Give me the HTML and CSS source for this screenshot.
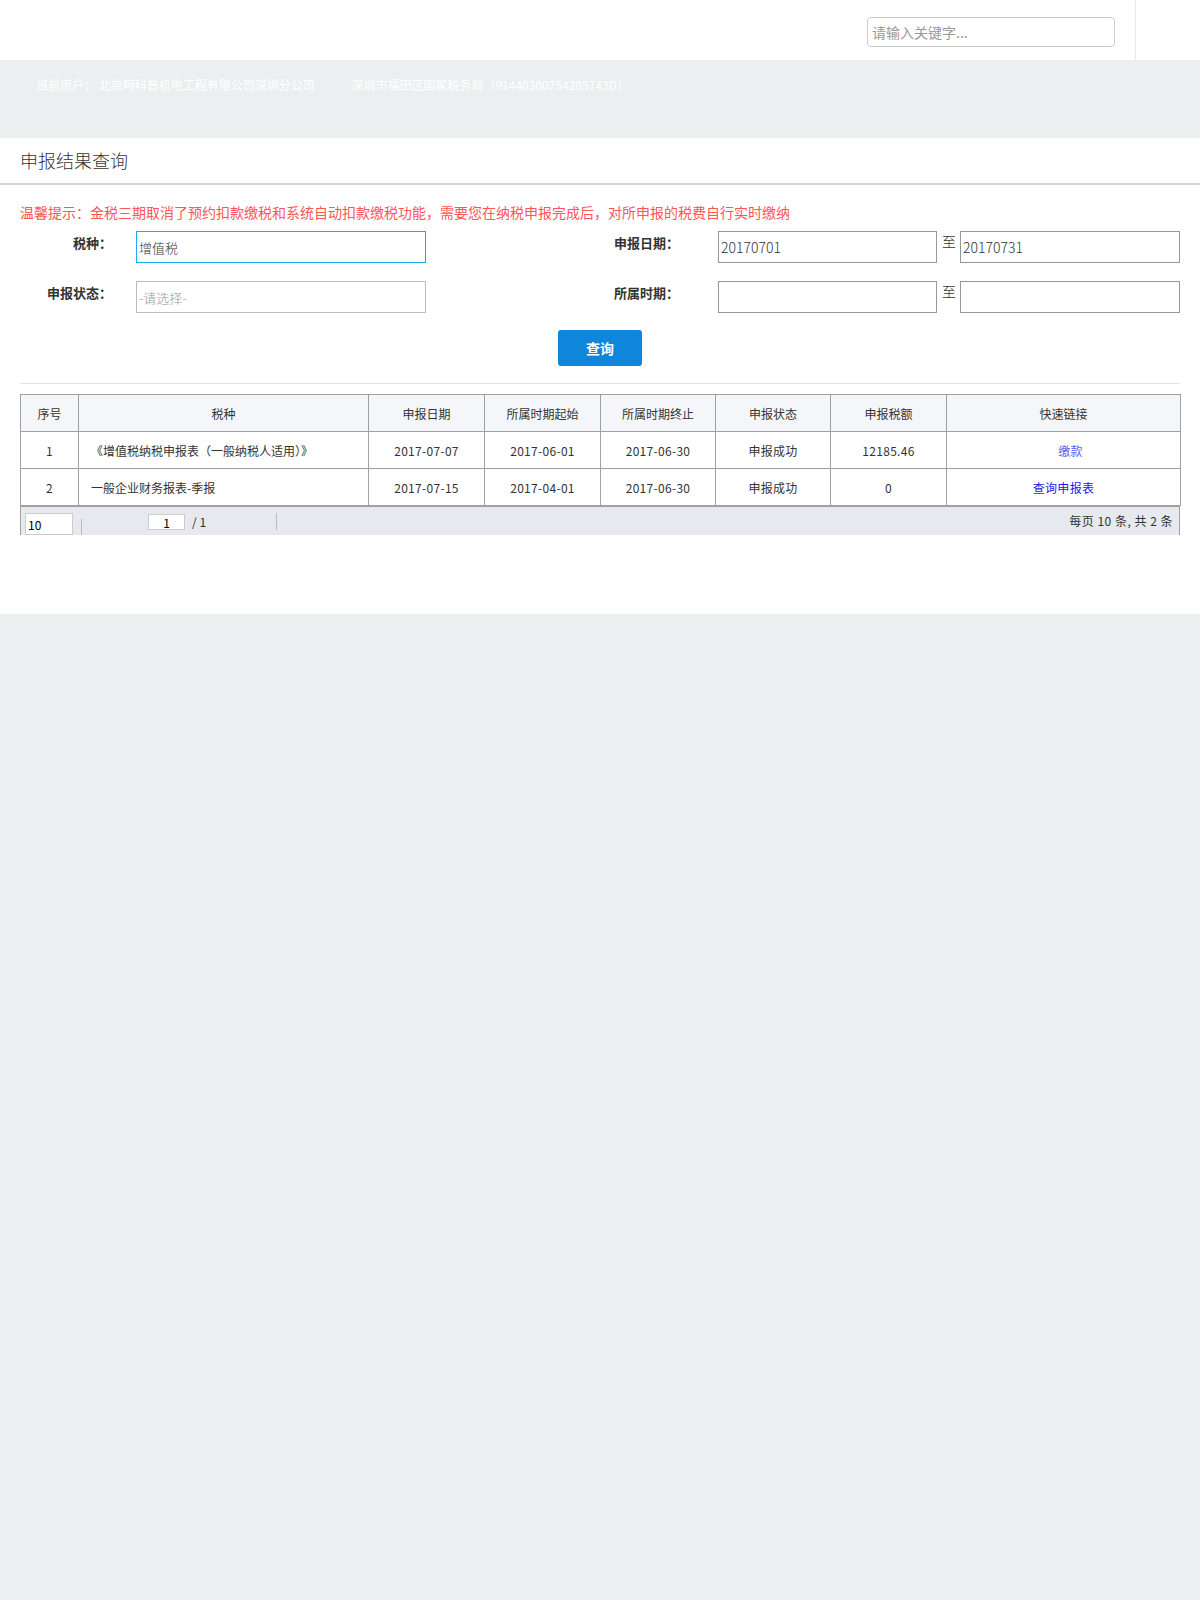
FILE: index.html
```html
<!DOCTYPE html>
<html lang="zh-CN">
<head>
<meta charset="utf-8">
<title>申报结果查询</title>
<link rel="stylesheet" href="styles.css">
</head>
<body>
<header class="topbar">
  <input class="search" type="text" placeholder="请输入关键字...">
  <div class="top-divider"></div>
</header>
<div class="userbar">
  <span class="user">当前用户：&nbsp;北京阿科普机电工程有限公司深圳分公司</span>
  <span class="bureau">深圳市福田区国家税务局（91440300754285743D）</span>
</div>
<main class="panel">
  <h1 class="panel-title">申报结果查询</h1>
  <div class="panel-body">
    <p class="notice">温馨提示：金税三期取消了预约扣款缴税和系统自动扣款缴税功能，需要您在纳税申报完成后，对所申报的税费自行实时缴纳</p>
    <div class="form-row">
      <div class="field-left">
        <label class="lbl">税种：</label>
        <input class="ipt ipt-focus" type="text" value="增值税">
      </div>
      <div class="field-right">
        <label class="lbl lbl-r">申报日期：</label>
        <input class="ipt ipt-date" type="text" value="20170701">
        <span class="to">至</span>
        <input class="ipt ipt-date2" type="text" value="20170731">
      </div>
    </div>
    <div class="form-row row2">
      <div class="field-left">
        <label class="lbl">申报状态：</label>
        <input class="ipt ipt-light" type="text" placeholder="-请选择-">
      </div>
      <div class="field-right">
        <label class="lbl lbl-r">所属时期：</label>
        <input class="ipt ipt-date" type="text">
        <span class="to">至</span>
        <input class="ipt ipt-date2" type="text">
      </div>
    </div>
    <div class="btn-row"><button class="btn" type="button">查询</button></div>
    <hr class="divider">
    <div class="grid">
      <table class="tbl">
        <colgroup>
          <col style="width:58px"><col style="width:290px"><col style="width:116px"><col style="width:116px">
          <col style="width:115px"><col style="width:115px"><col style="width:116px"><col style="width:234px">
        </colgroup>
        <thead>
          <tr><th>序号</th><th>税种</th><th>申报日期</th><th>所属时期起始</th><th>所属时期终止</th><th>申报状态</th><th>申报税额</th><th>快速链接</th></tr>
        </thead>
        <tbody>
          <tr><td>1</td><td class="left">《增值税纳税申报表（一般纳税人适用）》</td><td>2017-07-07</td><td>2017-06-01</td><td>2017-06-30</td><td>申报成功</td><td>12185.46</td><td><a class="lnk lnk-pay" href="#">缴款</a></td></tr>
          <tr><td>2</td><td class="left">一般企业财务报表-季报</td><td>2017-07-15</td><td>2017-04-01</td><td>2017-06-30</td><td>申报成功</td><td>0</td><td><a class="lnk" href="#">查询申报表</a></td></tr>
        </tbody>
      </table>
      <div class="pager">
        <input class="pg-size" type="text" value="10">
        <span class="pg-sep pg-sep1"></span>
        <input class="pg-num" type="text" value="1">
        <span class="pg-total">/ 1</span>
        <span class="pg-sep pg-sep2"></span>
        <span class="pg-info">每页 10 条, 共 2 条</span>
      </div>
    </div>
  </div>
</main>
</body>
</html>
```
FILE: styles.css
```css
* { box-sizing: border-box; }
body {
  margin: 0;
  background: #ebeff0;
  font-family: "Noto Sans CJK SC", "Noto Sans", sans-serif;
  color: #333;
}
.topbar {
  height: 60px;
  background: #fff;
  display: flex;
  justify-content: flex-end;
  padding-right: 64px;
}
.search {
  margin-top: 17px;
  width: 248px;
  height: 30px;
  border: 1px solid #ccc;
  border-radius: 4px;
  padding: 0 4px;
  font-family: inherit;
  font-size: 14px;
  color: #555;
  outline: none;
}
.search::placeholder { color: #999; }
.top-divider {
  margin-left: 20px;
  width: 1px;
  height: 60px;
  background: #e8e8e8;
}
.userbar {
  height: 78px;
  padding: 16px 0 0 36px;
  color: #fff;
  font-size: 12px;
  line-height: 18px;
}
.bureau { margin-left: 34px; }
.panel {
  background: #fff;
  height: 476px;
}
.panel-title {
  margin: 0;
  height: 47px;
  padding-left: 20px;
  font-size: 18px;
  font-weight: 300;
  line-height: 45px;
  color: #333;
  border-bottom: 2px solid #d6d6d6;
}
.panel-body { padding: 0 20px; }
.notice {
  margin: 0;
  padding-top: 17px;
  font-size: 14px;
  line-height: 20px;
  color: #ff5555;
}
.form-row {
  display: flex;
  margin-top: 9px;
  height: 32px;
}
.form-row.row2 { margin-top: 18px; }
.field-left { width: 580px; display: flex; align-items: flex-start; }
.field-right { display: flex; align-items: flex-start; }
.lbl {
  width: 92px;
  text-align: right;
  font-size: 13px;
  font-weight: bold;
  line-height: 20px;
  padding-top: 2px;
  color: #333;
}
.lbl-r { width: 79px; }
.ipt {
  height: 32px;
  border: 1px solid #999;
  padding: 0 2px;
  font-family: inherit;
  font-size: 14px;
  font-weight: 300;
  color: #333;
  outline: none;
  background: #fff;
}
.field-left .ipt { margin-left: 24px; width: 290px; font-size: 13px; }
.ipt-focus { border-color: #1eaaf1; }
.ipt-light { border-color: #bbb; }
.ipt-light::placeholder { color: #999; }
.ipt-date { margin-left: 39px; width: 219px; }
.ipt-date2 { width: 220px; }
.to {
  width: 23px;
  padding-left: 5px;
  font-size: 14px;
  line-height: 20px;
  font-weight: 300;
}
.btn-row {
  display: flex;
  justify-content: center;
  margin-top: 17px;
}
.btn {
  width: 84px;
  height: 36px;
  background: #0f85dc;
  color: #fff;
  border: none;
  border-radius: 3px;
  font-family: inherit;
  font-size: 14px;
  font-weight: bold;
}
.divider {
  margin: 17px 0 10px;
  border: none;
  border-top: 1px solid #e2e2e2;
  height: 0;
}
.grid { width: 1160px; }
.tbl {
  width: 1160px;
  table-layout: fixed;
  border-collapse: collapse;
  font-size: 12px;
  color: #333;
}
.tbl th, .tbl td {
  border: 1px solid #a0a0a0;
  height: 37px;
  text-align: center;
  font-weight: normal;
  padding: 0;
}
.tbl th { background: #f5f6f9; }
.tbl td { letter-spacing: 0.3px; }
.tbl td.left { text-align: left; padding-left: 12px; letter-spacing: 0; }
.lnk { color: #1a1ae8; text-decoration: none; }
.lnk-pay { color: #5c5cf5; margin-left: 14px; }
.pager {
  height: 29px;
  background: #e6e9ed;
  border-left: 1px solid #a0a0a0;
  border-right: 1px solid #a0a0a0;
  border-top: 1px solid #a0a0a0;
  display: flex;
  align-items: flex-start;
  font-size: 12px;
  color: #333;
}
.pg-size {
  margin: 6px 0 0 4px;
  width: 48px;
  height: 22px;
  border: 1px solid #ccc;
  padding: 0 2px;
  font-family: inherit;
  font-size: 12px;
  background: #fff;
}
.pg-sep {
  width: 1px;
  background: #bbb;
}
.pg-sep1 { margin: 12px 0 0 8px; height: 16px; }
.pg-num {
  margin: 7px 0 0 66px;
  width: 37px;
  height: 16px;
  border: 1px solid #ccc;
  padding: 0;
  text-align: center;
  font-family: inherit;
  font-size: 12px;
  background: #fff;
}
.pg-total { margin: 6px 0 0 7px; line-height: 18px; }
.pg-sep2 { margin: 6px 0 0 70px; height: 17px; }
.pg-info { margin: 5px 6px 0 auto; line-height: 18px; letter-spacing: 0.5px; }
```
